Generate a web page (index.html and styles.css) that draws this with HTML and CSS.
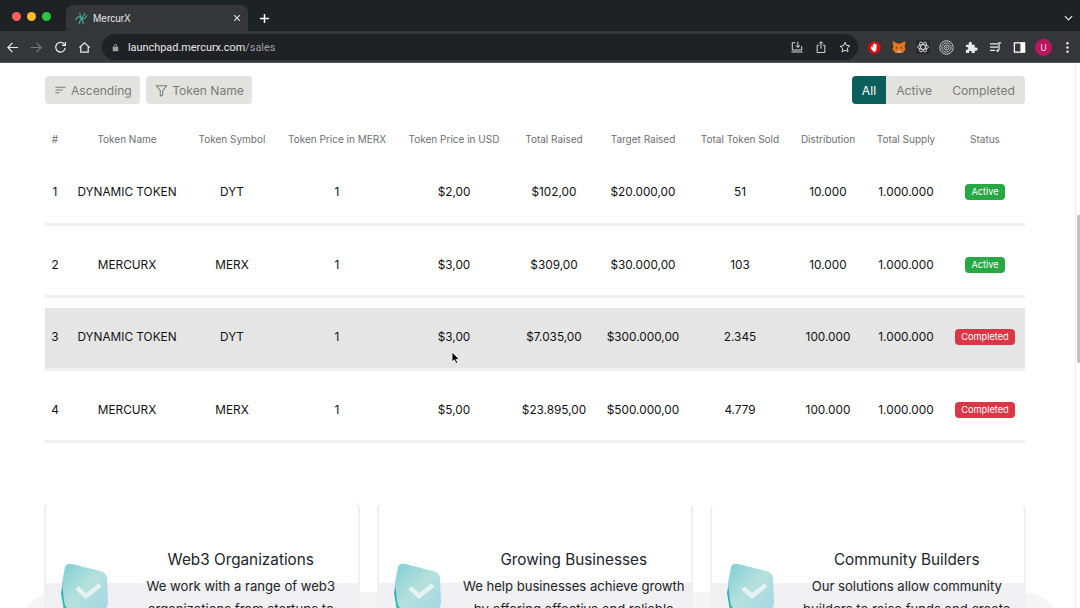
FILE: index.html
```html
<!DOCTYPE html>
<html lang="en">
    <head>
        <meta charset="UTF-8" />
        <meta name="viewport" content="width=device-width, initial-scale=1.0" />
        <title>MercurX</title>
        <link rel="stylesheet" href="styles.css">
    </head>
    <body>
        <header class="browser">
            <div class="tabstrip">
                <div class="lights">
                    <span class="light red"></span>
                    <span class="light yellow"></span>
                    <span class="light green"></span>
                </div>
                <div class="tab">
                    <svg class="favicon" viewBox="0 0 16 16" fill="none" stroke="#3fb59b" stroke-width="1.3">
                        <path d="M6 1c-1 5 5 9 4 14M12 1c0 5-7 8-7 14M1 10c1-4 4-5 6-3s5 3 8-3" />
                    </svg>
                    <span class="tab-title">MercurX</span>
                    <svg class="tab-close" viewBox="0 0 10 10" stroke="#e8eaed" stroke-width="1.3">
                        <path d="M1.5 1.5l7 7M8.5 1.5l-7 7" />
                    </svg>
                </div>
                <svg class="new-tab" viewBox="0 0 12 12" stroke="#fff" stroke-width="1.6">
                    <path d="M6 1v10M1 6h10" />
                </svg>
                <svg class="tab-menu" viewBox="0 0 10 6" fill="none" stroke="#e8eaed" stroke-width="1.3">
                    <path d="M1 1l4 4 4-4" />
                </svg>
            </div>
            <div class="toolbar">
                <span class="tool">
                    <svg viewBox="0 0 14 14" fill="none" stroke="#e8eaed" stroke-width="1.3"><path d="M13 7H2M7 2L2 7l5 5" /></svg>
                </span>
                <span class="tool">
                    <svg viewBox="0 0 14 14" fill="none" stroke="#77797c" stroke-width="1.3"><path d="M1 7h11M7 2l5 5-5 5" /></svg>
                </span>
                <span class="tool">
                    <svg viewBox="0 0 14 14" fill="none" stroke="#e8eaed" stroke-width="1.3"><path d="M11.5 4A5.2 5.2 0 1 0 12.2 7.5" /><path d="M12.3 1v3.6H8.7" /></svg>
                </span>
                <span class="tool">
                    <svg viewBox="0 0 14 14" fill="none" stroke="#e8eaed" stroke-width="1.3"><path d="M1.5 7L7 2l5.500 5M3 6v6h8V6" /></svg>
                </span>
                <div class="omnibox">
                    <svg class="lock" viewBox="0 0 10 12">
                        <path fill="#9aa0a6" d="M1 5h8v6.500H1zM2.700 5V3.300a2.300 2.300 0 0 1 4.600 0V5H6.200V3.300a1.200 1.200 0 0 0-2.400 0V5z" />
                    </svg>
                    <span class="url">launchpad.mercurx.com<span class="url-path">/sales</span></span>
                    <span class="omni-icons">
                        <svg viewBox="0 0 14 14" fill="none" stroke="#e8eaed" stroke-width="1.100"><path d="M5 2H1.500v8.500h11V6M8 1v6.500M5.500 5L8 7.500 10.500 5M.5 12.800h13" /></svg>
                        <svg viewBox="0 0 14 14" fill="none" stroke="#e8eaed" stroke-width="1.100"><path d="M4.500 5H2.500v8.500h9V5H9.500M7 9V1M4.800 3L7 .8 9.200 3" /></svg>
                        <svg viewBox="0 0 14 14" fill="none" stroke="#e8eaed" stroke-width="1.100"><path d="M7 1.500l1.700 3.600 3.900.5-2.900 2.700.8 3.900L7 10.800l-3.500 1.900.8-3.900-2.900-2.700 3.900-.5z" /></svg>
                    </span>
                </div>
                <span class="tool ext-first">
                    <svg viewBox="0 0 14 14"><circle cx="7" cy="7" r="6.800" fill="#d8100f" /><path fill="#fff" d="M3.500 6l.8-.3.900 1V3.400l.8-.2.500 2V2.500l.9-.1.300 2.700.7-2 .9.200-.3 6-1.200 2.200H6L3.200 8z" /></svg>
                </span>
                <span class="tool">
                    <svg class="fox" viewBox="0 0 14 14"><path fill="#e2761b" d="M.5 1l5 2.500h3l5-2.500-.8 6 .8 2.500-3 3.500H3.500l-3-3.500.8-2.500z" /><path fill="#c0ad9e" d="M5 10.500h4L8 13H6z" /><path fill="#233447" d="M4 7l1.500.5L4.500 9zM10 7L8.500 7.500 9.500 9z" /></svg>
                </span>
                <span class="tool">
                    <svg class="atom" viewBox="0 0 14 14" fill="none" stroke="#e8eaed" stroke-width=".8"><rect width="14" height="14" rx="2" fill="#26292b" stroke="none" /><ellipse cx="7" cy="7" rx="5.500" ry="2.300" /><ellipse cx="7" cy="7" rx="5.500" ry="2.300" transform="rotate(60 7 7)" /><ellipse cx="7" cy="7" rx="5.500" ry="2.300" transform="rotate(120 7 7)" /></svg>
                </span>
                <span class="tool">
                    <svg class="target" viewBox="0 0 14 14" fill="none" stroke="#c9cbce" stroke-width=".9"><circle cx="7" cy="7" r="6.300" /><circle cx="7" cy="7" r="4.300" /><circle cx="7" cy="7" r="2.300" /><circle cx="7" cy="7" r=".6" /></svg>
                </span>
                <span class="tool">
                    <svg viewBox="0 0 14 14"><path fill="#e8eaed" d="M1 4h3V2.500a1.700 1.700 0 0 1 3.400 0V4h3.100v3H12a1.700 1.700 0 0 1 0 3.400h-1.500V13H7.200v-1.200a1.400 1.400 0 0 0-2.800 0V13H1V9.500h1a1.500 1.500 0 0 0 0-3H1z" /></svg>
                </span>
                <span class="tool">
                    <svg viewBox="0 0 14 14" fill="none" stroke="#e8eaed" stroke-width="1.300"><path d="M1 3h9M1 6.500h9M1 10h5.500" /><path d="M13 2h-2.200v8" /><circle cx="9.300" cy="10.500" r="1.300" fill="#e8eaed" stroke="none" /></svg>
                </span>
                <span class="tool">
                    <svg viewBox="0 0 14 14" fill="none" stroke="#fff" stroke-width="1.400"><rect x="1.500" y="2" width="11" height="10" /><rect x="8" y="2" width="4.500" height="10" fill="#fff" stroke="none" /></svg>
                </span>
                <span class="tool">
                    <span class="avatar">U</span>
                </span>
                <span class="tool">
                    <svg viewBox="0 0 14 14" fill="#e8eaed"><circle cx="7" cy="2.500" r="1.300" /><circle cx="7" cy="7" r="1.300" /><circle cx="7" cy="11.500" r="1.300" /></svg>
                </span>
            </div>
        </header>

        <main class="page">
            <div class="filters">
                <div class="filter-buttons">
                    <button class="filter-btn">
                        <svg viewBox="0 0 14 14" fill="none" stroke="#7b7b79" stroke-width="1.100"><path d="M1.500 3.500h11M1.500 6.500h8M1.500 9.500h4.500" /></svg>
                        Ascending
                    </button>
                    <button class="filter-btn">
                        <svg viewBox="0 0 14 14" fill="none" stroke="#7b7b79" stroke-width="1.100"><path d="M1.500 2h11L8.300 7.200V12L5.700 13V7.200z" /></svg>
                        Token Name
                    </button>
                </div>
                <div class="status-tabs">
                    <span class="status-tab selected">All</span>
                    <span class="status-tab">Active</span>
                    <span class="status-tab">Completed</span>
                </div>
            </div>

            <table class="sales">
                <colgroup>
                    <col class="c-num" /><col class="c-name" /><col class="c-symbol" /><col class="c-merx" />
                    <col class="c-usd" /><col class="c-raised" /><col class="c-target" /><col class="c-sold" />
                    <col class="c-dist" /><col class="c-supply" /><col class="c-status" />
                </colgroup>
                <thead>
                    <tr>
                        <th>#</th>
                        <th>Token Name</th>
                        <th>Token Symbol</th>
                        <th>Token Price in MERX</th>
                        <th>Token Price in USD</th>
                        <th>Total Raised</th>
                        <th>Target Raised</th>
                        <th>Total Token Sold</th>
                        <th>Distribution</th>
                        <th>Total Supply</th>
                        <th>Status</th>
                    </tr>
                </thead>
                <tbody>
                    <tr>
                        <td>1</td><td>DYNAMIC TOKEN</td><td>DYT</td><td>1</td><td>$2,00</td><td>$102,00</td>
                        <td>$20.000,00</td><td>51</td><td>10.000</td><td>1.000.000</td>
                        <td><span class="badge active">Active</span></td>
                    </tr>
                    <tr>
                        <td>2</td><td>MERCURX</td><td>MERX</td><td>1</td><td>$3,00</td><td>$309,00</td>
                        <td>$30.000,00</td><td>103</td><td>10.000</td><td>1.000.000</td>
                        <td><span class="badge active">Active</span></td>
                    </tr>
                    <tr class="hovered">
                        <td>3</td><td>DYNAMIC TOKEN</td><td>DYT</td><td>1</td><td>$3,00</td><td>$7.035,00</td>
                        <td>$300.000,00</td><td>2.345</td><td>100.000</td><td>1.000.000</td>
                        <td><span class="badge completed">Completed</span></td>
                    </tr>
                    <tr>
                        <td>4</td><td>MERCURX</td><td>MERX</td><td>1</td><td>$5,00</td><td>$23.895,00</td>
                        <td>$500.000,00</td><td>4.779</td><td>100.000</td><td>1.000.000</td>
                        <td><span class="badge completed">Completed</span></td>
                    </tr>
                </tbody>
            </table>

            <section class="audience">
                <div class="blob"></div>
                <svg class="defs" width="0" height="0">
                    <defs>
                        <linearGradient id="gemFace" x1="0" y1="0" x2="1" y2="1">
                            <stop offset="0" stop-color="#7fcfd6" />
                            <stop offset=".5" stop-color="#b5e0dc" />
                            <stop offset="1" stop-color="#a3d6e6" />
                        </linearGradient>
                        <linearGradient id="gemBack" x1="0" y1="0" x2="0" y2="1">
                            <stop offset="0" stop-color="#3f9fdc" />
                            <stop offset="1" stop-color="#1fc4a0" />
                        </linearGradient>
                        <symbol id="gem" viewBox="0 0 48 48">
                            <path fill="url(#gemBack)" d="M1 30l2-12 10 30H4z" />
                            <path fill="url(#gemFace)" d="M5 4c1-3 4-4 7-3l28 7c4 1 7 4 7 7l1 24c0 5-3 9-8 9H14C8 48 5 44 4 38L2 20z" />
                            <path fill="none" stroke="#e4f3f1" stroke-width="4.500" d="M17 25l9 8 14-11" />
                        </symbol>
                    </defs>
                </svg>
                <article class="card">
                    <svg class="gem"><use href="#gem" /></svg>
                    <div class="card-text">
                        <h3>Web3 Organizations</h3>
                        <p>We work with a range of web3 organizations from startups to</p>
                    </div>
                </article>
                <article class="card">
                    <svg class="gem"><use href="#gem" /></svg>
                    <div class="card-text">
                        <h3>Growing Businesses</h3>
                        <p>We help businesses achieve growth by offering effective and reliable</p>
                    </div>
                </article>
                <article class="card">
                    <svg class="gem"><use href="#gem" /></svg>
                    <div class="card-text">
                        <h3>Community Builders</h3>
                        <p>Our solutions allow community builders to raise funds and create</p>
                    </div>
                </article>
            </section>

            <svg class="cursor" viewBox="0 0 10 14">
                <path fill="#000" stroke="#fff" stroke-width=".8" d="M1 1v10l2.400-2.200L5 12.500l1.700-.8L5.200 8.300h3.200z" />
            </svg>
        </main>

        <div class="scrollbar"><div class="scroll-thumb"></div></div>
    </body>
</html>
```

FILE: styles.css
```css
* {
    padding: 0;
    margin: 0;
    box-sizing: border-box;
}
html,
body {
    height: 608px;
    overflow: hidden;
}
body {
    position: relative;
    background-color: white;
    font-family: Inter, "Noto Sans", sans-serif;
    color: #212529;
}

/* browser chrome */
.tabstrip {
    height: 31px;
    background-color: #1f2224;
    display: flex;
    align-items: flex-end;
}
.lights {
    display: flex;
    gap: 6px;
    width: 66px;
    height: 31px;
    padding: 11.500px 0 0 11.500px;
}
.light {
    width: 9px;
    height: 9px;
    border-radius: 50%;
}
.red { background-color: #ff5f57; }
.yellow { background-color: #febc2e; }
.green { background-color: #28c840; }
.tab {
    width: 182px;
    height: 26px;
    background-color: #35363a;
    border-radius: 7px 7px 0 0;
    display: flex;
    align-items: center;
    padding: 0 7px 0 9px;
    font-family: "Liberation Sans", sans-serif;
    font-size: 10px;
    color: #e8eaed;
}
.favicon {
    width: 13px;
    height: 13px;
    margin-right: 5px;
}
.tab-title {
    flex: 1;
}
.tab-close {
    width: 8px;
    height: 8px;
}
.new-tab {
    width: 11px;
    height: 11px;
    margin: 0 0 7px 11px;
}
.tab-menu {
    width: 9px;
    height: 6px;
    margin: 0 7px 10px auto;
}
.toolbar {
    height: 32px;
    padding: 1px 0 0 1px;
    background-color: #35363a;
    border-bottom: 1px solid #55575a;
    display: flex;
    align-items: center;
}
.tool {
    width: 24px;
    height: 24px;
    display: flex;
    align-items: center;
    justify-content: center;
}
.tool svg {
    width: 13px;
    height: 13px;
}
.tool .fox,
.tool .atom {
    width: 14px;
    height: 14px;
}
.tool .target {
    width: 15px;
    height: 15px;
}
.ext-first ~ .tool {
    width: 24.200px;
}
.omnibox {
    width: 756px;
    height: 26px;
    margin-left: 5px;
    background-color: #202124;
    border-radius: 13px;
    display: flex;
    align-items: center;
    padding-left: 10px;
}
.lock {
    width: 7px;
    height: 9px;
    margin-right: 9px;
}
.url {
    flex: 1;
    font-family: Roboto, sans-serif;
    font-size: 10.900px;
    color: #e8eaed;
}
.url-path {
    color: #9aa0a6;
}
.omni-icons {
    display: flex;
    gap: 12px;
    margin-right: 7px;
}
.omni-icons svg {
    width: 12px;
    height: 12px;
}
.ext-first {
    margin-left: 5px;
}
.avatar {
    width: 17px;
    height: 17px;
    border-radius: 50%;
    background-color: #b9175e;
    color: #f3d6e3;
    font-family: Roboto, sans-serif;
    font-size: 9.500px;
    display: flex;
    align-items: center;
    justify-content: center;
}

/* page */
.page {
    position: relative;
    padding: 13px 55px 0 45px;
}
.filters {
    display: flex;
    justify-content: space-between;
    height: 28px;
}
.filter-buttons {
    display: flex;
    gap: 6px;
}
.filter-btn {
    display: flex;
    align-items: center;
    gap: 4px;
    height: 28px;
    padding: 0 8.500px 0 9px;
    border: none;
    border-radius: 4px;
    background-color: #e2e2de;
    color: #7b7b79;
    font-family: inherit;
    font-size: 12.100px;
}
.filter-btn svg {
    width: 13px;
    height: 13px;
}
.status-tabs {
    display: flex;
    border-radius: 4px;
    overflow: hidden;
    background-color: #e2e2de;
    font-size: 12.200px;
    color: #7b7b79;
}
.status-tab {
    display: flex;
    align-items: center;
    padding: 0 10px;
}
.status-tab.selected {
    background-color: #0b5f5b;
    color: white;
}

/* table */
.sales {
    width: 980px;
    margin-top: 10px;
    table-layout: fixed;
    border-collapse: separate;
    border-spacing: 0 10px;
    text-align: center;
}
.c-num { width: 20px; }
.c-name { width: 124px; }
.c-symbol { width: 86px; }
.c-merx { width: 124px; }
.c-usd { width: 110px; }
.c-raised { width: 90px; }
.c-target { width: 88px; }
.c-sold { width: 106px; }
.c-dist { width: 70px; }
.c-supply { width: 86px; }
.c-status { width: 76px; }
.sales th {
    height: 29px;
    padding-top: 1px;
    font-size: 10px;
    font-weight: 400;
    color: #6c6f72;
    white-space: nowrap;
}
.sales td {
    height: 62.500px;
    padding-bottom: 1px;
    border-bottom: 3px solid #f0f0f0;
    font-size: 11.800px;
    color: #111;
    white-space: nowrap;
}
.sales th:last-child,
.sales td:last-child {
    padding-right: 4px;
}
.hovered td {
    background-color: #e5e5e5;
}
.badge {
    display: inline-block;
    padding: 0 6px;
    height: 16px;
    line-height: 16px;
    border-radius: 4px;
    font-size: 9.200px;
    color: white;
}
.active { background-color: #28a745; }
.completed { background-color: #dc3545; }

/* audience cards */
.audience {
    position: relative;
    width: 982px;
    margin-left: -1px;
    margin-top: 49.500px;
    display: grid;
    grid-template-columns: repeat(3, 316px);
    justify-content: space-between;
}
.defs {
    position: absolute;
}
.blob {
    position: absolute;
    left: -26px;
    right: -36px;
    top: 89px;
    height: 80px;
    border-radius: 40px;
    background-color: #f5f5f6;
}
.card {
    position: relative;
    height: 200px;
    display: flex;
    border-left: 2px solid #f0f0f0;
    border-right: 2px solid #f0f0f0;
    border-radius: 6px 6px 0 0;
    background: linear-gradient(white 80px, #f0f0f2 80px);
}
.gem {
    width: 48px;
    height: 48px;
    margin: 60px 0 0 14px;
    flex-shrink: 0;
}
.card-text {
    width: 238px;
    margin-left: 15.500px;
    padding-top: 47px;
    text-align: center;
}
.card-text h3 {
    font-size: 15.300px;
    font-weight: 400;
    line-height: 20px;
    color: #212529;
}
.card-text p {
    margin-top: 5px;
    font-size: 13.100px;
    line-height: 23px;
    color: #212529;
}

.cursor {
    position: absolute;
    left: 451px;
    top: 288px;
    width: 10px;
    height: 14px;
}

/* scrollbar */
.scrollbar {
    position: absolute;
    right: 0;
    top: 63px;
    bottom: 0;
    width: 5px;
    background-color: white;
    border-left: 1px solid #ececec;
}
.scroll-thumb {
    width: 3px;
    height: 148px;
    margin: 152px 0 0 1px;
    border-radius: 2px 0 0 2px;
    background-color: #c1c1c1;
}
```
